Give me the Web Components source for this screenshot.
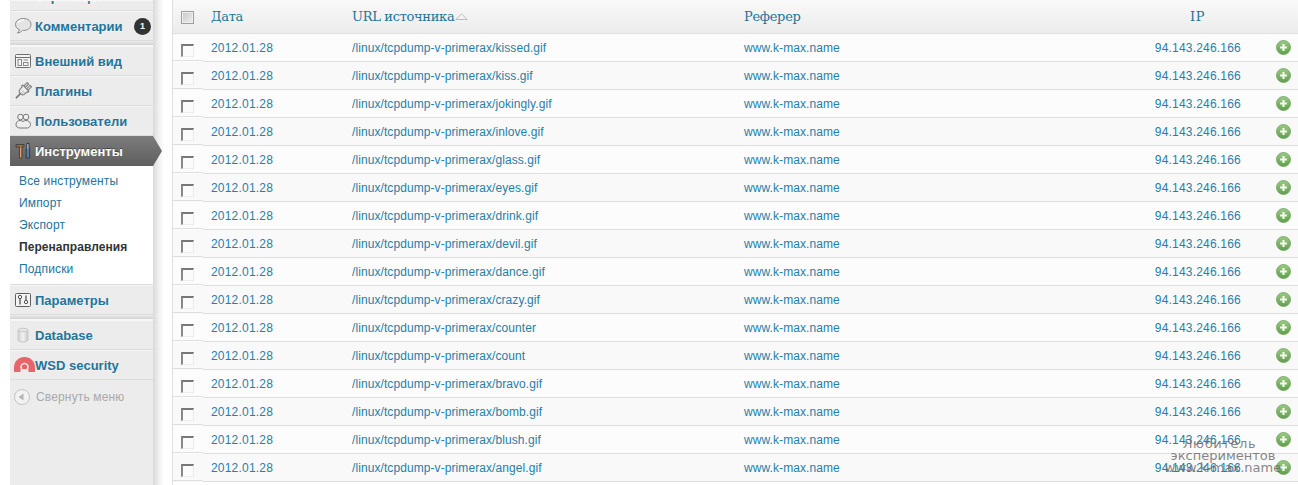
<!DOCTYPE html>
<html><head><meta charset="utf-8"><title>Перенаправления</title>
<style>
html,body{margin:0;padding:0;background:#fff;height:485px;overflow:hidden}
body{font:12px "Liberation Sans",Arial,sans-serif;display:flex;padding-left:10px;box-sizing:border-box}
</style></head><body>
<side-menu></side-menu>
<log-table></log-table>
<water-mark></water-mark>
<script>
const ICONS={
 page:'<rect x="3" y="-6" width="13" height="15" fill="#f4f4f4" stroke="#777"/><path d="M1 8h11v3H1z" fill="#888"/>',
 comment:'<path d="M9.500 1.500C5 1.500 1.500 4 1.500 7.500c0 2.400 1.600 4.300 4 5.200-.3 1.400-1.200 2.500-2.200 3.300 2.300-.2 4-1.200 5.200-2.600h1c4.400 0 7.500-2.500 7.500-5.900s-3-6-7.500-6z" fill="#e4e4e4" stroke="#8a8a8a"/><path d="M4 6c1-2 3-3 6-3" fill="none" stroke="#fff" stroke-width="1.500"/>',
 appearance:'<rect x="1.500" y="2.500" width="15" height="13" rx="1" fill="#f4f4f4" stroke="#6f6f6f"/><path d="M2 5.500h14" stroke="#6f6f6f"/><rect x="4" y="7.500" width="3.500" height="6" fill="none" stroke="#888"/><path d="M9.500 8h4.500" stroke="#888"/><rect x="9.500" y="10.500" width="4.500" height="3" fill="none" stroke="#888"/>',
 plugin:'<g transform="rotate(45 9 9)" stroke="#777" fill="#eee"><path d="M6.500 0h2v5h-2zM10.500 0h2v5h-2z" transform="translate(-.5 0)"/><path d="M4.500 5h9v1.500h-1V9c0 2.200-1.500 3.800-3.500 3.800S5.500 11.200 5.500 9V6.500h-1z"/><path d="M9 13v6" fill="none" stroke-width="1.600"/></g><path d="M8 8.500l3 3M6.500 10l3 3" stroke="#aaa" fill="none"/>',
 users:'<circle cx="6.500" cy="5" r="2.800" fill="#f0f0f0" stroke="#777"/><circle cx="12" cy="5" r="2.800" fill="#f0f0f0" stroke="#777"/><path d="M2 12.500c0-2.500 2-4 4-4 1 0 2 .3 3 1 1-.7 2-1 3-1 2.500 0 4.500 1.700 4.500 4 0 1.500-1 3-3 3.500H6c-2.500 0-4-1.500-4-3.500z" fill="#eee" stroke="#777"/>',
 tools:'<path d="M2 2.500h8v2.500H8v11H5.500V5H2z" fill="#9a6a45" stroke="#3a3a3a" stroke-width=".8"/><path d="M6 5.500h1.200v10H6z" fill="#e0a070"/><path d="M12.800 1.500h2.200v5h.6v9.500h-3.400V6.500h.6z" fill="#5a7fa5" stroke="#2a2a2a" stroke-width=".8"/><path d="M13.500 2h.8v5h-.8z" fill="#ddd"/>',
 settings:'<rect x="1.500" y="2.500" width="15" height="13" rx="1" fill="#f4f4f4" stroke="#5f5f5f"/><circle cx="6" cy="6" r="1.700" fill="none" stroke="#555"/><path d="M6 7.500v6" stroke="#555" stroke-width="1.300"/><circle cx="12" cy="11" r="1.700" fill="none" stroke="#555"/><path d="M12 4.500v5" stroke="#555" stroke-width="1.300"/>',
 db:'<defs><linearGradient id="d" x1="0" x2="1"><stop offset="0" stop-color="#cfcfcf"/><stop offset=".5" stop-color="#f2f2f2"/><stop offset="1" stop-color="#c8c8c8"/></linearGradient></defs><path d="M4 4v10c0 1.200 2.200 2 5 2s5-.8 5-2V4z" fill="url(#d)" stroke="#c9c9c9"/><ellipse cx="9" cy="4" rx="5" ry="1.800" fill="#e4e4e4" stroke="#c9c9c9"/>'
};
const ico=k=>`<svg width="18" height="18" viewBox="0 0 18 18" aria-hidden="true">${ICONS[k]}</svg>`;

class MenuItem extends HTMLElement{
 connectedCallback(){
  const k=this.getAttribute('icon');
  const s=this.attachShadow({mode:'open'});
  s.innerHTML=`<style>
  :host{display:block;box-sizing:border-box;height:30px;border-bottom:1px solid #dcdcdc;border-top:1px solid #f6f6f6;background:#ececec;position:relative}
  :host([clip]){height:11px;overflow:hidden}
  :host([clip]) .r{margin-top:-19px}
  .r{display:flex;align-items:center;height:28px;padding-left:4px;gap:3px;font:bold 13px "Liberation Sans",Arial,sans-serif;color:#21759b;white-space:nowrap;text-shadow:0 1px 0 rgba(255,255,255,.5)}
  .i{width:18px;height:18px;flex:none;display:block}
  svg{display:block}
  :host([active]){height:30px;border:0;background:linear-gradient(#7c7c7c,#6d6d6d 50%,#5f5f5f);z-index:1}
  :host([active]) .r{color:#fff;height:30px;text-shadow:0 -1px 0 rgba(0,0,0,.4)}
  :host([active])::after{content:"";position:absolute;left:100%;top:0;width:9px;height:30px;background:linear-gradient(#7c7c7c,#6d6d6d 50%,#5f5f5f);clip-path:polygon(0 0,100% 50%,0 100%)}
  ::slotted([slot=badge]){margin-left:auto}
  </style><div class="r"><span class="i">${ico(k)}</span><span><slot></slot></span><slot name="badge"></slot></div>`;
 }
}
customElements.define('menu-item',MenuItem);

class CountBadge extends HTMLElement{
 connectedCallback(){
  this.attachShadow({mode:'open'}).innerHTML=`<style>:host{display:inline-flex;align-items:center;justify-content:center;width:17px;height:17px;border-radius:50%;background:#333;color:#fff;font:bold 9px "Liberation Sans",Arial,sans-serif;text-shadow:none;flex:none}</style><slot></slot>`;
 }
}
customElements.define('count-badge',CountBadge);

class SubMenu extends HTMLElement{
 connectedCallback(){
  const s=this.attachShadow({mode:'open'});
  const items=[['Все инструменты'],['Импорт'],['Экспорт'],['Перенаправления',1],['Подписки']];
  s.innerHTML=`<style>
  :host{display:block;background:#fff;padding:4px 0 3px;height:119px;box-sizing:border-box;border-bottom:1px solid #dcdcdc}
  a{display:block;height:22px;padding-left:9px;color:#21759b;font:12px/22px "Liberation Sans",Arial,sans-serif;letter-spacing:.15px;white-space:nowrap;text-decoration:none}
  a.on{color:#333;font-weight:bold;letter-spacing:.05px}
  </style>${items.map(([t,on])=>`<a href="#" class="${on?'on':''}">${t}</a>`).join('')}`;
 }
}
customElements.define('sub-menu',SubMenu);

class MenuSep extends HTMLElement{
 connectedCallback(){
  this.attachShadow({mode:'open'}).innerHTML=`<style>:host{display:block;height:5px;box-sizing:border-box;background:linear-gradient(#ececec,#dcdcdc 60%,#d4d4d4);border-bottom:1px solid #f6f6f6}</style>`;
 }
}
customElements.define('menu-sep',MenuSep);

class SideMenu extends HTMLElement{
 connectedCallback(){
  this.attachShadow({mode:'open'}).innerHTML=`<style>
  :host{display:block;width:143px;flex:none;height:485px;background:#ececec;position:relative;font:12px "Liberation Sans",Arial,sans-serif}
  :host::after{content:"";position:absolute;left:100%;top:0;bottom:0;width:11px;background:linear-gradient(90deg,#d9d9d9,#f1f1f1 55%,#fff)}
  .wsd{display:block;height:30px;box-sizing:border-box;border-top:1px solid #f6f6f6;border-bottom:1px solid #dcdcdc;position:relative}
  .wr{display:flex;align-items:center;height:28px;padding-left:4px;font:bold 13px "Liberation Sans",Arial,sans-serif;color:#21759b;text-shadow:0 1px 0 rgba(255,255,255,.5)}
  .wr svg{flex:none;display:block}
  .col{display:flex;align-items:center;height:34px;padding-left:3px;gap:5px;color:#aaa;font:12px "Liberation Sans",Arial,sans-serif;letter-spacing:.15px}
  </style>
  <menu-item icon="page" clip>Страницы</menu-item>
  <menu-item icon="comment">Комментарии<count-badge slot="badge" style="margin-right:2px">1</count-badge></menu-item>
  <menu-sep></menu-sep>
  <menu-item icon="appearance">Внешний вид</menu-item>
  <menu-item icon="plugin">Плагины</menu-item>
  <menu-item icon="users">Пользователи</menu-item>
  <menu-item icon="tools" active>Инструменты</menu-item>
  <sub-menu></sub-menu>
  <menu-item icon="settings">Параметры</menu-item>
  <menu-sep></menu-sep>
  <menu-item icon="db">Database</menu-item>
  <div class="wsd"><div class="wr"><svg width="21" height="18" viewBox="0 0 21 18" aria-hidden="true"><path d="M0 16V11.500C0 5.500 4.500 1 10.500 1S21 5.500 21 11.500V16z" fill="#e8646b"/><circle cx="10.500" cy="11" r="4.300" fill="#f6e4e4"/><circle cx="10.500" cy="11" r="2.700" fill="#e8646b"/><path d="M6.500 13.500h8V16h-8z" fill="#ececec"/></svg>WSD security</div></div>
  <div class="col"><svg width="18" height="18" viewBox="0 0 18 18" aria-hidden="true"><circle cx="9" cy="9" r="7.500" fill="#f2f2f2" stroke="#c4c4c4"/><path d="M5.500 9l5-3.500v7z" fill="#b4b4b4"/></svg>Свернуть меню</div>`;
 }
}
customElements.define('side-menu',SideMenu);

class LogCheck extends HTMLElement{
 connectedCallback(){
  this.attachShadow({mode:'open'}).innerHTML=`<style>
  :host{display:block;width:13px;height:13px;box-sizing:border-box;background:#fbfbfb;border:1px solid #ececec;border-top:2px solid #777;border-left:2px solid #888;flex:none}
  :host([head]){border:1px solid #a0a0a0;background:linear-gradient(135deg,#c9c9c9,#eee);outline:1px solid #eee;outline-offset:-2px}
  </style>`;
 }
}
customElements.define('log-check',LogCheck);

const COLS='30px 141px 392px 411px 1fr 57px';
class LogRow extends HTMLElement{
 connectedCallback(){
  const u=this.getAttribute('url');
  this.attachShadow({mode:'open'}).innerHTML=`<style>
  :host{display:grid;grid-template-columns:${COLS};height:28px;box-sizing:border-box;font:12px "Liberation Sans",Arial,sans-serif;color:#2580a8;background:var(--row,#fcfcfc)}
  .ck{box-sizing:border-box;height:27px;border-bottom:1px solid #dfdfdf;padding:10px 0 0 8px}
  .c{height:28px;box-sizing:border-box;border-bottom:1px solid #dfdfdf;padding:7px 0 0 8px;line-height:15px;white-space:nowrap;letter-spacing:.08px}
  .d,.ip{letter-spacing:.2px}
  .c.ip{text-align:right;padding-left:0}
  .c.act{padding:6px 0 0 35px}
  .act svg{display:block}
  </style>
  <div class="ck"><log-check></log-check></div>
  <div class="c d">2012.01.28</div>
  <div class="c">${u}</div>
  <div class="c">www.k-max.name</div>
  <div class="c ip">94.143.246.166</div>
  <div class="c act"><svg width="15" height="15" viewBox="0 0 15 15" aria-hidden="true"><defs><linearGradient id="g" x1="0" y1="0" x2="0" y2="1"><stop offset="0" stop-color="#9ccb85"/><stop offset="1" stop-color="#5f9f4a"/></linearGradient></defs><circle cx="7.500" cy="7.500" r="7" fill="url(#g)" stroke="#6aa257" stroke-width=".8"/><path d="M6.400 4h2.200v2.400H11v2.200H8.600V11H6.400V8.600H4V6.400h2.400z" fill="#f4f9f0"/></svg></div>`;
 }
}
customElements.define('log-row',LogRow);

class LogTable extends HTMLElement{
 connectedCallback(){
  const names=['kissed.gif','kiss.gif','jokingly.gif','inlove.gif','glass.gif','eyes.gif','drink.gif','devil.gif','dance.gif','crazy.gif','counter','count','bravo.gif','bomb.gif','blush.gif','angel.gif'];
  this.attachShadow({mode:'open'}).innerHTML=`<style>
  :host{display:block;flex:1;min-width:0;margin-left:19px;border-left:1px solid #dfdfdf;height:485px;overflow:hidden;background:#fff}
  .h{display:grid;grid-template-columns:${COLS};height:34px;box-sizing:border-box;border-bottom:1px solid #dfdfdf;background:linear-gradient(#f9f9f9,#ececec);font:13px "DejaVu Serif",Georgia,serif;color:#21759b;letter-spacing:-.3px}
  .h>div{padding:9px 0 0 8px;line-height:16px;white-space:nowrap}
  .h .ck{padding:11px 0 0 8px}
  .h .ipc{text-align:center;padding-left:7px;letter-spacing:.6px}
  .ar{display:inline-block;vertical-align:1px;margin-left:1px}
  log-row:nth-of-type(even){--row:#f9f9f9}
  </style>
  <div class="h"><div class="ck"><log-check head></log-check></div><div>Дата</div><div>URL источника<svg class="ar" width="13" height="7" viewBox="0 0 13 7" aria-hidden="true"><path d="M.8 6.500L6.500.8l5.700 5.700z" fill="none" stroke="#bbb"/></svg></div><div>Реферер</div><div class="ipc">IP</div><div></div></div>
  ${names.map(n=>`<log-row url="/linux/tcpdump-v-primerax/${n}"></log-row>`).join('')}`;
 }
}
customElements.define('log-table',LogTable);

class WaterMark extends HTMLElement{
 connectedCallback(){
  this.attachShadow({mode:'open'}).innerHTML=`<style>
  :host{position:absolute;left:1163px;top:438px;width:120px;text-align:center;font:13px/12px "DejaVu Sans",Verdana,sans-serif;color:rgba(110,110,110,.85);white-space:nowrap;pointer-events:none}
  div{height:12px}
  .a{letter-spacing:.6px;margin-left:-7px}
  </style><div class="a">Любитель</div><div>экспериментов</div><div>www.k-max.name</div>`;
 }
}
customElements.define('water-mark',WaterMark);
</script>
</body></html>
